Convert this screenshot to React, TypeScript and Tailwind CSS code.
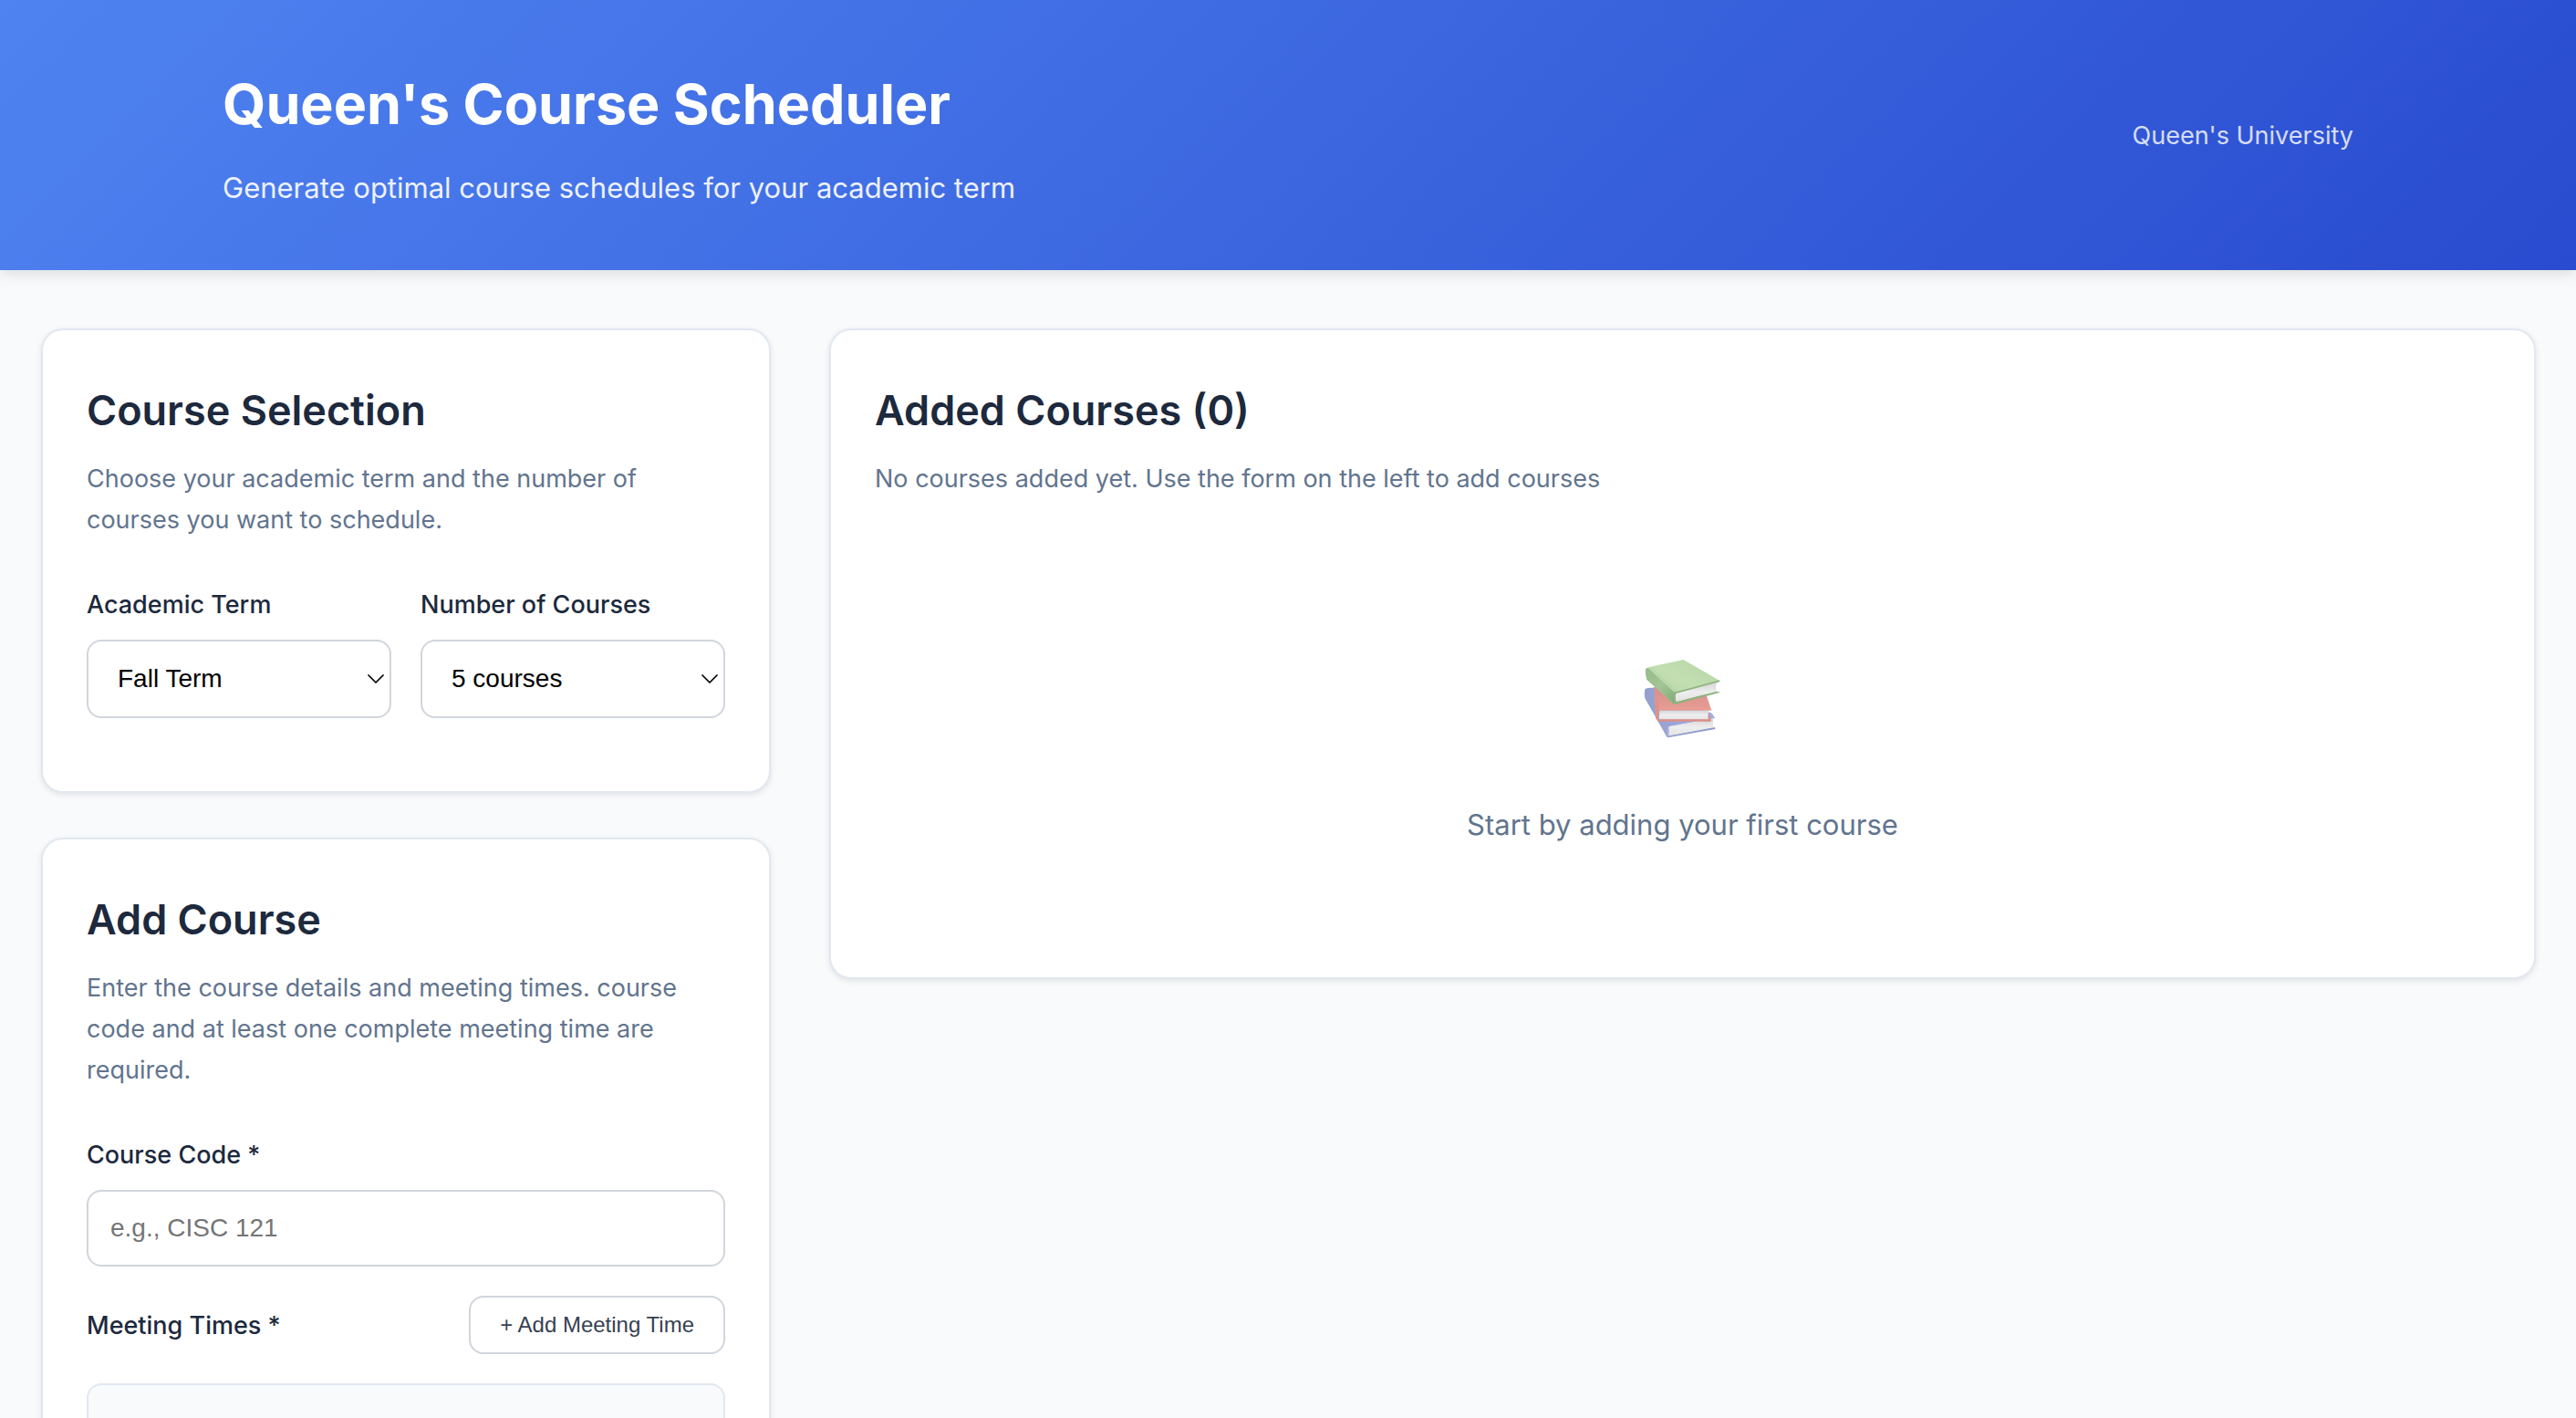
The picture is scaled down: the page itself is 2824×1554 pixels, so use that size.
import type { ReactNode } from "react";

function Card({ title, description, children }: { title: string; description: string; children: ReactNode }) {
  return (
    <section className="rounded-3xl border-2 border-slate-200 bg-white px-12 pt-14 pb-12 shadow-[0_2px_6px_rgba(0,0,0,0.1)]">
      <h2 className="text-[45px] leading-[64px] font-semibold text-slate-800">{title}</h2>
      <p className="mt-5 text-[27px] leading-[45px] text-slate-500">{description}</p>
      {children}
    </section>
  );
}

function Chevron() {
  return (
    <svg viewBox="0 0 18 12" className="pointer-events-none absolute right-2 top-1/2 h-3 w-[18px] -translate-y-1/2" fill="none" stroke="black" strokeWidth="1.7" strokeLinecap="round" strokeLinejoin="round">
      <path d="M1 2 L9 10 L17 2" />
    </svg>
  );
}

function SelectField({ id, label, options }: { id: string; label: string; options: string[] }) {
  return (
    <div className="min-w-0 flex-1">
      <label htmlFor={id} className="block text-[27px] leading-[45px] font-medium text-slate-800">{label}</label>
      <div className="relative mt-4">
        <select id={id} className="block h-[86px] w-full appearance-none rounded-2xl border-2 border-gray-300 bg-white px-8 font-['Liberation_Sans',sans-serif] text-[28px] text-black">
          {options.map((option) => (
            <option key={option}>{option}</option>
          ))}
        </select>
        <Chevron />
      </div>
    </div>
  );
}

function Books() {
  return (
    <svg viewBox="60 60 270 270" className="size-[90px]" aria-hidden="true">
      <defs>
        <linearGradient id="greenCover" x1="0" y1="1" x2="1" y2="0">
          <stop offset="0" stopColor="#a9cd9a" />
          <stop offset="0.5" stopColor="#c3dfb2" />
          <stop offset="1" stopColor="#b4d5a3" />
        </linearGradient>
        <linearGradient id="greenSpine" x1="0" y1="0" x2="1" y2="1">
          <stop offset="0" stopColor="#97bb8b" />
          <stop offset="0.5" stopColor="#a3c496" />
          <stop offset="1" stopColor="#82ab78" />
        </linearGradient>
        <linearGradient id="redCover" x1="0" y1="0" x2="0" y2="1">
          <stop offset="0" stopColor="#d48f88" />
          <stop offset="1" stopColor="#f0a299" />
        </linearGradient>
        <linearGradient id="blueSpine" x1="0" y1="0" x2="1" y2="0">
          <stop offset="0" stopColor="#929fcf" />
          <stop offset="1" stopColor="#a5b1df" />
        </linearGradient>
        <linearGradient id="pages" x1="0" y1="0" x2="0" y2="1">
          <stop offset="0" stopColor="#d6d6d6" />
          <stop offset="0.5" stopColor="#eeeeee" />
          <stop offset="1" stopColor="#e2e2e2" />
        </linearGradient>
      </defs>
      <path d="M70 166 L76 163 L108 160 L290 245 L301 261 L148 289 L143 325 L70 196 Q67 180 70 166Z" fill="url(#blueSpine)" />
      <path d="M148 289 L294 264 L294 292 L149 318Z" fill="url(#pages)" />
      <path d="M142 320 L300 291 L301 297 L145 325Z" fill="#8e9aca" />
      <path d="M143 287 L149 288 L149 318 L143 325Z" fill="#a9b2d9" />
      <path d="M101 158 L120 156 L272 186 L289 236 L117 236 L110 268 L106 262 L102 210Z" fill="url(#redCover)" />
      <path d="M101 158 L107 162 L118 236 L112 270 L106 262Z" fill="#df928c" />
      <path d="M118 236 H280 Q275 250 279 266 H116Z" fill="url(#pages)" />
      <path d="M112 265 H278 L280 243 L288 268 L286 272 H112Z" fill="#dc8f88" />
      <path d="M73 98 L86 92 L197 69 L316 138 L168 177 L166 215 L76 134 Q70 114 73 98Z" fill="url(#greenCover)" />
      <path d="M73 98 L80 96 L168 177 L165 215 L76 134 Q70 114 73 98Z" fill="url(#greenSpine)" />
      <path d="M90 97 L174 174" stroke="#a5c997" strokeWidth="2" fill="none" />
      <path d="M172 178 L306 145 Q301 159 306 173 L173 208 Q167 194 172 178Z" fill="url(#pages)" />
      <path d="M166 176 L316 136 L315 142 L172 180 Q168 194 173 208 L306 173 L318 176 L166 217 Q161 196 166 176Z" fill="#8bb47f" />
    </svg>
  );
}

export default function App() {
  return (
    <div className="h-screen overflow-hidden bg-slate-50 font-['Inter',sans-serif]">
      <header className="bg-[linear-gradient(135deg,#4f83f1_0%,#294bcf_100%)] px-[244px] py-16 text-white shadow-[0_4px_16px_rgba(0,0,0,0.12)]">
        <div className="flex items-center justify-between">
          <div>
            <h1 className="text-[61px] leading-[100px] font-bold">Queen's Course Scheduler</h1>
            <p className="mt-4 text-[31px] leading-[52px] opacity-90">Generate optimal course schedules for your academic term</p>
          </div>
          <span className="text-[27px] leading-[45px] opacity-80">Queen's University</span>
        </div>
      </header>
      <main className="flex items-start gap-16 pt-16 pr-11 pl-[45px]">
        <div className="flex w-[800px] shrink-0 flex-col gap-[49px]">
          <Card title="Course Selection" description="Choose your academic term and the number of courses you want to schedule.">
            <div className="mt-12 mb-8 flex gap-8">
              <SelectField id="term" label="Academic Term" options={["Fall Term", "Winter Term"]} />
              <SelectField id="count" label="Number of Courses" options={["5 courses", "4 courses", "3 courses"]} />
            </div>
          </Card>
          <Card title="Add Course" description="Enter the course details and meeting times. course code and at least one complete meeting time are required.">
            <label htmlFor="code" className="mt-12 block text-[27px] leading-[45px] font-medium text-slate-800">Course Code *</label>
            <input id="code" placeholder="e.g., CISC 121" className="mt-4 block h-[84px] w-full rounded-2xl border-2 border-gray-300 bg-white px-6 font-['Liberation_Sans',sans-serif] text-[28px] placeholder:text-[#757575]" />
            <div className="mt-8 flex items-center justify-between">
              <h3 className="text-[27px] leading-[45px] font-medium text-slate-800">Meeting Times *</h3>
              <button type="button" className="h-16 rounded-2xl border-2 border-gray-300 bg-white px-8 font-['Liberation_Sans',sans-serif] text-[24px] text-gray-700">+ Add Meeting Time</button>
            </div>
            <div className="mt-8 h-64 rounded-2xl border-2 border-slate-200 bg-slate-50" />
          </Card>
        </div>
        <div className="min-w-0 flex-1">
          <Card title="Added Courses (0)" description="No courses added yet. Use the form on the left to add courses">
            <div className="flex flex-col items-center pt-[173px] pb-[95px]">
              <Books />
              <p className="mt-[70px] text-[31px] leading-[48px] text-slate-500">Start by adding your first course</p>
            </div>
          </Card>
        </div>
      </main>
    </div>
  );
}
